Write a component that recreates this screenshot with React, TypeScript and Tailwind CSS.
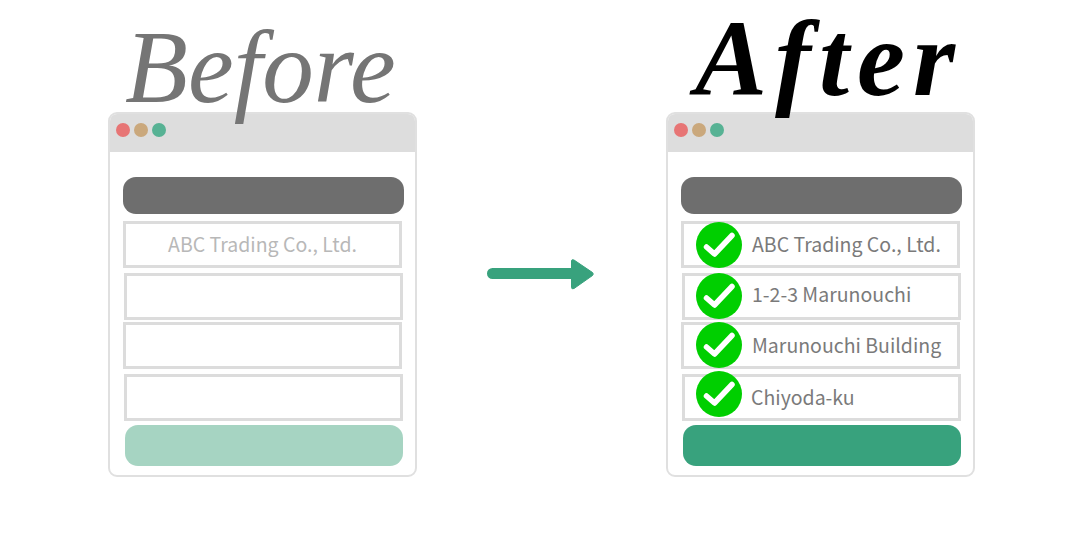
import React from "react";

const rowTexts = ["ABC Trading Co., Ltd.", "1-2-3 Marunouchi", "Marunouchi Building", "Chiyoda-ku"];

function Check() {
  return (
    <svg width="46" height="46" viewBox="0 0 46 46" className="shrink-0 block">
      <circle cx="23" cy="23" r="23" fill="#00cf00" />
      <path d="M10.500 25 L18.500 32 L36 13.500" fill="none" stroke="#fff" strokeWidth="5.500" strokeLinecap="round" strokeLinejoin="round" />
    </svg>
  );
}

function Row({ text, check, mt, ml, pl, iconY, textDx, textY }: { text?: string; check?: boolean; mt: string; ml: string; pl: string; iconY: string; textDx: string; textY: string }) {
  return (
    <div className={`h-[47px] w-[279px] ${mt} ${ml} border-[3px] border-[#dcdcdc] bg-white flex items-center justify-center`}>
      {check ? (
        <div className={`flex items-center w-full ${pl}`}>
          <div className={`my-[-3px] ${iconY}`}><Check /></div>
          <span className={`${textDx} ${textY} text-[19.5px] leading-[30px] text-[#7a7a7a] whitespace-nowrap`}>{text}</span>
        </div>
      ) : (
        <span className="text-[19.5px] leading-[30px] text-[#b8b8b8] whitespace-nowrap -translate-y-[1px]">{text}</span>
      )}
    </div>
  );
}

function Browser({ after }: { after?: boolean }) {
  const texts = after ? rowTexts : [rowTexts[0], "", "", ""];
  return (
    <div className="w-[309px] h-[365px] rounded-[9px] border-2 border-[#e0e0e0] bg-white overflow-hidden flex flex-col">
      <div className="h-[38px] bg-[#dddddd] flex items-center gap-[4px] pl-[6px] shrink-0 pb-[6px]">
        <span className="w-[14px] h-[14px] rounded-full bg-[#e77575]" />
        <span className="w-[14px] h-[14px] rounded-full bg-[#caa87c]" />
        <span className="w-[14px] h-[14px] rounded-full bg-[#57b294]" />
      </div>
      <div className="flex flex-col pl-[13px] pr-[11px]">
        <div className="mt-[25px] h-[37px] w-[281px] rounded-[13px] bg-[#6e6e6e]" />
        <Row text={texts[0]} check={after} mt="mt-[7px]" ml="ml-[0px]" pl="pl-[12px]" iconY="translate-y-0" textDx="ml-[10px]" textY="-translate-y-[1px]" />
        <Row text={texts[1]} check={after} mt="mt-[5px]" ml="ml-[1px]" pl="pl-[11px]" iconY="-translate-y-[1px]" textDx="ml-[10px]" textY="-translate-y-[3px]" />
        <Row text={texts[2]} check={after} mt="mt-[2px]" ml="ml-[0px]" pl="pl-[12px]" iconY="-translate-y-[1px]" textDx="ml-[10px]" textY="-translate-y-[1px]" />
        <Row text={texts[3]} check={after} mt="mt-[5px]" ml="ml-[1px]" pl="pl-[11px]" iconY="-translate-y-[4px]" textDx="ml-[9px]" textY="-translate-y-[1px]" />
        <div className={`mt-[4px] ml-[2px] h-[41px] w-[278px] rounded-[13px] ${after ? "bg-[#38a27d]" : "bg-[#a6d4c2]"}`} />
      </div>
    </div>
  );
}

function Arrow() {
  return (
    <svg width="107" height="32" viewBox="0 0 107 32" className="block">
      <rect x="0" y="10" width="90" height="11" rx="5.500" fill="#38a27d" />
      <path d="M84.500 3 Q84.500 1 87 2 L105.500 14.500 Q107 16 105.500 17.500 L87 30.500 Q84.500 31.500 84.500 29.500 Z" fill="#38a27d" stroke="#38a27d" strokeWidth="1" />
    </svg>
  );
}

export default function App() {
  return (
    <div className="w-[1080px] h-[540px] bg-white overflow-hidden flex items-start pl-[108px]" style={{ fontFamily: '"Noto Sans CJK JP", "Noto Sans", sans-serif' }}>
      <div className="relative mt-[112px] shrink-0">
        <Browser />
        <div className="absolute left-[17px] top-[-96px] leading-[1] text-[103px] italic text-[#757575] whitespace-nowrap font-['Liberation_Serif',serif]">Before</div>
      </div>
      <div className="ml-[70px] mt-[258px] shrink-0"><Arrow /></div>
      <div className="relative ml-[72px] mt-[112px] shrink-0">
        <Browser after />
        <div className="absolute left-[29px] top-[-107px] leading-[1] text-[108px] italic font-bold tracking-[8px] text-black whitespace-nowrap font-['Liberation_Serif',serif]">After</div>
      </div>
    </div>
  );
}
